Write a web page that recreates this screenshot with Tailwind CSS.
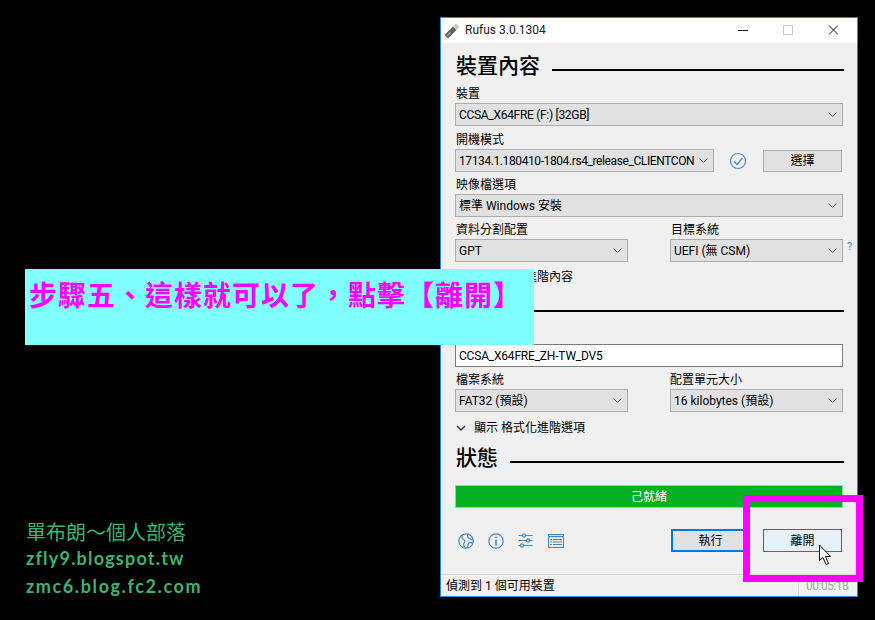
<!DOCTYPE html>
<html lang="zh-Hant">
<head>
<meta charset="UTF-8">
<title>Rufus 3.0.1304</title>
<script src="https://cdn.jsdelivr.net/npm/@tailwindcss/browser@4"></script>
</head>
<body class="bg-black w-[875px] h-[620px] overflow-hidden relative font-['Roboto','Noto_Sans_CJK_TC',sans-serif] text-[12px] text-black">

<!-- rufus window -->
<div class="absolute left-[440px] top-[17px] w-[418px] h-[580px] border border-[#2b88d8] bg-[#f0f0f0] flex flex-col">
  <!-- title bar -->
  <div class="h-[25px] bg-white flex items-center shrink-0">
    <svg class="ml-[3px] w-[16px] h-[16px]" viewBox="0 0 16 16">
      <path d="M0.5 12 L9 3.5 L12.5 7 L4 15.5 Z" fill="#5f5f5f"/>
      <path d="M2.5 12.2 L6 9 L7 10 L3.5 13.2 Z" fill="#a8a8a8"/>
      <path d="M9 3.5 L12 0.5 L15.5 4 L12.5 7 Z" fill="#c8c8c8"/>
    </svg>
    <span class="ml-[5px] leading-[25px] text-[#1a1a1a]">Rufus 3.0.1304</span>
    <svg class="ml-auto mr-[19px] w-[100px] h-[11px]" viewBox="0 0 100 11" fill="none">
      <path d="M0 5.5 H10" stroke="#111"/>
      <rect x="45.5" y="0.5" width="9" height="9" stroke="#cfcfcf"/>
      <path d="M91 0.5 L100 9.5 M100 0.5 L91 9.5" stroke="#111"/>
    </svg>
  </div>

  <!-- body -->
  <div class="flex-1 pl-[14px] pr-[13px] relative">
    <div class="mt-[12px] h-[24px] flex items-start">
      <span class="text-[21px] leading-[22px] font-medium ml-px">裝置內容</span>
      <div class="ml-[12px] flex-1 h-[2px] bg-black mt-[14px]"></div>
    </div>

    <div class="mt-[4px] h-[20px] leading-[22px] ml-px">裝置</div>
    <div class="h-[23px] w-[388px] border border-[#adadad] bg-[#e1e1e1] flex items-center pl-[3px] pr-[5px]">
      <span class="tracking-[-0.3px]">CCSA_X64FRE (F:) [32GB]</span>
      <svg class="ml-auto w-[9px] h-[5px]" viewBox="0 0 9 5" fill="none"><path d="M0.5 0.5 L4.5 4.5 L8.5 0.5" stroke="#555"/></svg>
    </div>

    <div class="mt-[3px] h-[20px] leading-[22px] ml-px">開機模式</div>
    <div class="h-[23px] flex w-[388px]">
      <div class="w-[259px] border border-[#adadad] bg-[#e1e1e1] flex items-center pl-[3px] pr-[5px] whitespace-nowrap overflow-hidden">
        <span class="tracking-[-0.4px]">17134.1.180410-1804.rs4_release_CLIENTCON</span>
        <svg class="ml-auto shrink-0 w-[9px] h-[5px]" viewBox="0 0 9 5" fill="none"><path d="M0.5 0.5 L4.5 4.5 L8.5 0.5" stroke="#555"/></svg>
      </div>
      <svg class="ml-[15px] mt-[3px] w-[18px] h-[18px]" viewBox="0 0 18 18" fill="none">
        <circle cx="9" cy="9" r="7.5" stroke="#4a90c8" stroke-width="1.2"/>
        <path d="M5 9.5 L8 12.5 L13.5 6" stroke="#4a90c8" stroke-width="1.2"/>
      </svg>
      <div class="ml-[16px] mt-px w-[79px] h-[22px] border border-[#adadad] bg-[#e1e1e1] flex items-center justify-center">選擇</div>
    </div>

    <div class="mt-[2px] h-[20px] leading-[22px] ml-px">映像檔選項</div>
    <div class="h-[23px] w-[388px] border border-[#adadad] bg-[#e1e1e1] flex items-center pl-[3px] pr-[5px]">
      <span>標準 Windows 安裝</span>
      <svg class="ml-auto w-[9px] h-[5px]" viewBox="0 0 9 5" fill="none"><path d="M0.5 0.5 L4.5 4.5 L8.5 0.5" stroke="#555"/></svg>
    </div>

    <div class="mt-[2px] w-[388px] grid grid-cols-[173px_173px] justify-between relative">
      <div>
        <div class="h-[20px] leading-[22px] ml-px">資料分割配置</div>
        <div class="h-[23px] border border-[#adadad] bg-[#e1e1e1] flex items-center pl-[3px] pr-[5px]">
          <span>GPT</span>
          <svg class="ml-auto w-[9px] h-[5px]" viewBox="0 0 9 5" fill="none"><path d="M0.5 0.5 L4.5 4.5 L8.5 0.5" stroke="#555"/></svg>
        </div>
      </div>
      <div>
        <div class="h-[20px] leading-[22px] ml-px">目標系統</div>
        <div class="h-[23px] border border-[#adadad] bg-[#e1e1e1] flex items-center pl-[3px] pr-[5px]">
          <span>UEFI (無 CSM)</span>
          <svg class="ml-auto w-[9px] h-[5px]" viewBox="0 0 9 5" fill="none"><path d="M0.5 0.5 L4.5 4.5 L8.5 0.5" stroke="#555"/></svg>
        </div>
      </div>
      <span class="absolute left-[392px] top-[20px] text-[11px] leading-[16px] text-[#4a8fc7]">?</span>
    </div>

    <div class="mt-[6px] h-[18px] flex items-center">
      <svg class="ml-px w-[10px] h-[6px]" viewBox="0 0 10 6" fill="none"><path d="M1 1 L5 5 L9 1" stroke="#333" stroke-width="1.4"/></svg>
      <span class="ml-[8px] leading-[20px]">顯示 裝置進階內容</span>
    </div>

    <div class="mt-[10px] h-[24px] flex items-start">
      <span class="text-[21px] leading-[22px] font-medium ml-px">格式化</span>
      <div class="ml-[12px] flex-1 h-[2px] bg-black mt-[14px]"></div>
    </div>

    <div class="mt-[4px] h-[20px] leading-[22px] ml-px">磁碟區標籤</div>
    <div class="h-[23px] w-[388px] border border-[#7a7a7a] bg-white flex items-center pl-[3px] tracking-[-0.2px]">CCSA_X64FRE_ZH-TW_DV5</div>

    <div class="mt-[2px] w-[388px] grid grid-cols-[173px_173px] justify-between">
      <div>
        <div class="h-[20px] leading-[22px] ml-px">檔案系統</div>
        <div class="h-[23px] border border-[#adadad] bg-[#e1e1e1] flex items-center pl-[3px] pr-[5px]">
          <span>FAT32 (預設)</span>
          <svg class="ml-auto w-[9px] h-[5px]" viewBox="0 0 9 5" fill="none"><path d="M0.5 0.5 L4.5 4.5 L8.5 0.5" stroke="#555"/></svg>
        </div>
      </div>
      <div>
        <div class="h-[20px] leading-[22px]">配置單元大小</div>
        <div class="h-[23px] border border-[#adadad] bg-[#e1e1e1] flex items-center pl-[3px] pr-[5px]">
          <span>16 kilobytes (預設)</span>
          <svg class="ml-auto w-[9px] h-[5px]" viewBox="0 0 9 5" fill="none"><path d="M0.5 0.5 L4.5 4.5 L8.5 0.5" stroke="#555"/></svg>
        </div>
      </div>
    </div>

    <div class="mt-[7px] h-[18px] flex items-center">
      <svg class="ml-px w-[10px] h-[6px]" viewBox="0 0 10 6" fill="none"><path d="M1 1 L5 5 L9 1" stroke="#333" stroke-width="1.4"/></svg>
      <span class="ml-[8px] leading-[20px]">顯示 格式化進階選項</span>
    </div>

    <div class="mt-[10px] h-[24px] flex items-start">
      <span class="text-[21px] leading-[22px] font-medium ml-px">狀態</span>
      <div class="ml-[12px] flex-1 h-[2px] bg-black mt-[14px]"></div>
    </div>

    <div class="mt-[14px] h-[23px] w-[388px] border border-[#bcbcbc] bg-[#06b025] flex items-center justify-center text-white">己就緒</div>

    <!-- toolbar + buttons -->
    <div class="mt-[21px] h-[23px] w-[388px] flex items-center">
      <svg class="ml-[3px] w-[16px] h-[16px]" viewBox="0 0 16 16" fill="none" stroke="#3f88c5" stroke-width="1.2">
        <circle cx="8" cy="8" r="7.2"/>
        <path d="M5.5 1.5 C3 3 3.5 5.5 5.5 6.5 C7.5 7.5 7 9.5 6 10 C5 11 6 13 6.5 14.5"/>
        <path d="M10 1.5 C9 3.5 10 5 11 5.5 C13 6 14 7 14.5 7 M10 15 C9.5 12.5 10 10.5 11.5 9.5 C13 9 14 10 14.5 10.5"/>
      </svg>
      <svg class="ml-[14px] w-[16px] h-[16px]" viewBox="0 0 16 16" fill="none" stroke="#3f88c5" stroke-width="1.2">
        <circle cx="8" cy="8" r="7.2"/>
        <path d="M8 6.5 V12.5" stroke-width="1.6"/>
        <path d="M8 3.5 V5" stroke-width="1.6"/>
      </svg>
      <svg class="ml-[14px] w-[15px] h-[15px]" viewBox="0 0 15 15" fill="none" stroke="#3f88c5" stroke-width="1.1">
        <path d="M0.5 2.5 H14.5 M0.5 7.5 H14.5 M0.5 12.5 H14.5"/>
        <circle cx="6" cy="2.5" r="1.6" fill="#f0f0f0"/>
        <circle cx="10" cy="7.5" r="1.6" fill="#f0f0f0"/>
        <circle cx="4" cy="12.5" r="1.6" fill="#f0f0f0"/>
      </svg>
      <svg class="ml-[15px] w-[16px] h-[14px]" viewBox="0 0 16 14" fill="none" stroke="#3f88c5">
        <rect x="0.5" y="0.5" width="15" height="13"/>
        <path d="M0.5 2.5 H15.5" stroke-width="1.4"/>
        <path d="M2 5.5 H4 M5 5.5 H14 M2 8 H4 M5 8 H14 M2 10.5 H4 M5 10.5 H14"/>
      </svg>
      <div class="ml-[107px] w-[79px] h-[23px] border-2 border-[#0078d7] bg-[#e1e1e1] flex items-center justify-center">執行</div>
      <div class="ml-[13px] w-[79px] h-[23px] border border-[#0078d7] bg-[#e5f1fb] flex items-center justify-center">離開</div>
    </div>
  </div>

  <!-- status bar -->
  <div class="h-[22px] shrink-0 border-t border-[#d7d7d7] flex items-center">
    <span class="ml-[5px]">偵測到 1 個可用裝置</span>
    <div class="ml-auto w-[59px] h-full border-l border-[#d7d7d7] flex items-center pl-[7px] text-[#a6a6a6] tracking-[-0.5px]">00:05:18</div>
  </div>
</div>

<!-- caption banner -->
<div class="absolute left-[25px] top-[269px] w-[509px] h-[76px] bg-[#80ffff] pl-[4px] pt-[6px] whitespace-nowrap text-[28px] leading-[38px] tracking-[1px] font-bold text-[#ff00ff] font-['Noto_Sans_CJK_TC',sans-serif]">步驟五、這樣就可以了&#xFF0C;點擊【離開】</div>

<!-- highlight on the exit button -->
<div class="absolute left-[743px] top-[495px] w-[120px] h-[87px] border-[7px] border-[#ff00ff]"></div>

<!-- mouse cursor -->
<svg class="absolute left-[818px] top-[544px] w-[14px] h-[22px]" viewBox="0 0 14 22">
  <path d="M1.5 1 V16.5 L5 13.5 L8 20.5 L10.5 19.5 L7.5 12.5 L12.5 12.5 Z" fill="#fff" stroke="#111" stroke-width="1"/>
</svg>

<!-- watermark -->
<div class="absolute left-[26px] top-[519px] text-[#3cb371]">
  <div class="text-[20px] leading-[25px] font-['Noto_Sans_CJK_TC',sans-serif]">單布朗&#xFF5E;個人部落</div>
  <div class="text-[18px] leading-[29px] font-bold font-['Lato',sans-serif] tracking-[1.2px]">zfly9.blogspot.tw</div>
  <div class="text-[18px] leading-[26px] font-bold font-['Lato',sans-serif] tracking-[1.6px]">zmc6.blog.fc2.com</div>
</div>
</body>
</html>
